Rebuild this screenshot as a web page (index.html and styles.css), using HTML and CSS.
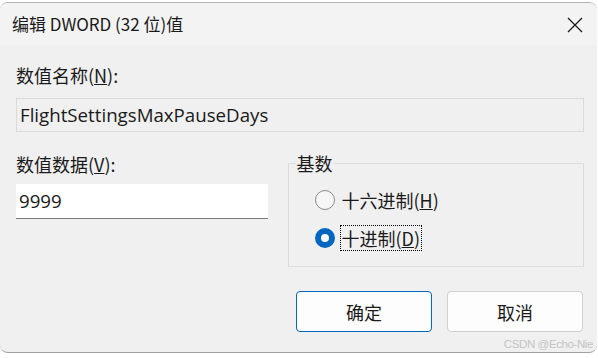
FILE: index.html
```html
<!DOCTYPE html>
<html lang="zh-CN">
<head>
    <meta charset="UTF-8">
    <title>编辑 DWORD (32 位)值</title>
    <link rel="stylesheet" href="styles.css">
</head>
<body>
    <div class="dialog">
        <div class="titlebar">
            <span class="title">编辑 DWORD (32 位)值</span>
            <svg class="close" width="16" height="16" viewBox="0 0 16 16">
                <path d="M1 1 L15 15 M15 1 L1 15" stroke="#1a1a1a" stroke-width="1.3" fill="none"/>
            </svg>
        </div>

        <div class="content">
            <div class="label">数值名称(<u>N</u>):</div>
            <div class="name-field">FlightSettingsMaxPauseDays</div>

            <div class="row">
                <div class="data-col">
                    <div class="label">数值数据(<u>V</u>):</div>
                    <div class="data-field">9999</div>
                </div>

                <fieldset class="base-group">
                    <legend>基数</legend>
                    <div class="radio">
                        <span class="dot"></span>
                        <span class="radio-text">十六进制(<u>H</u>)</span>
                    </div>
                    <div class="radio">
                        <span class="dot checked"></span>
                        <span class="radio-text focus">十进制(<u>D</u>)</span>
                    </div>
                </fieldset>
            </div>

            <div class="buttons">
                <button class="btn primary">确定</button>
                <button class="btn">取消</button>
            </div>
        </div>
        <div class="watermark">CSDN @Echo-Nie</div>
    </div>
</body>
</html>
```

FILE: styles.css
```css
body {
    margin: 0;
    padding: 0;
    background: #ffffff;
    font-family: "Noto Sans CJK SC", "Noto Sans", sans-serif;
    color: #1a1a1a;
    overflow: hidden;
}

.dialog {
    position: relative;
    margin-top: 2px;
    width: 597px;
    height: 349px;
    background: #f0f0f0;
    border-top: 1px solid #b4b4b4;
    border-bottom: 1px solid #a0a0a0;
    border-radius: 8px;
    overflow: hidden;
}

.titlebar {
    height: 42px;
    background: #f3f3f3;
    display: flex;
    align-items: center;
    justify-content: space-between;
    padding: 0 14px 0 12px;
}

.title {
    font-size: 17px;
    margin-top: -2px;
}

.close {
    margin-top: 2px;
}

.content {
    padding: 18px 13px 0 16px;
}

.label {
    font-size: 18px;
    line-height: 24px;
}

.name-field {
    margin-top: 11px;
    height: 34px;
    box-sizing: border-box;
    border: 1px solid #dadada;
    background: #f0f0f0;
    font-family: "Open Sans", sans-serif;
    font-size: 18.7px;
    line-height: 31px;
    padding-left: 3px;
}

.row {
    display: flex;
    margin-top: 20px;
}

.data-col {
    width: 252px;
}

.data-field {
    margin-top: 8px;
    height: 35px;
    box-sizing: border-box;
    background: #ffffff;
    border-bottom: 1px solid #7a7a7a;
    font-family: "Open Sans", sans-serif;
    font-size: 18.7px;
    line-height: 33px;
    padding-left: 3px;
}

.base-group {
    margin: -1px 0 0 20px;
    padding: 12px 0 0 26px;
    width: 297px;
    height: 116px;
    border: 1px solid #dcdcdc;
    box-sizing: border-box;
}

.base-group legend {
    font-size: 18px;
    line-height: 24px;
    padding: 0 1px;
    margin-left: -19px;
}

.radio {
    display: flex;
    align-items: center;
    height: 26px;
    margin-bottom: 12px;
    font-size: 18px;
}

.dot {
    width: 20px;
    height: 20px;
    border-radius: 50%;
    border: 1px solid #8a8a8a;
    background: #f6f6f6;
    box-sizing: border-box;
    margin-right: 5px;
}

.dot.checked {
    border: 6px solid #0067c0;
    background: #ffffff;
}

.radio-text {
    padding: 0 1px;
    line-height: 24px;
    border: 1px solid transparent;
}

.radio-text.focus {
    border: 1px dotted #000000;
}

.buttons {
    display: flex;
    justify-content: flex-end;
    gap: 15px;
    margin-top: 24px;
    margin-right: 1px;
}

.btn {
    width: 136px;
    height: 41px;
    background: #fdfdfd;
    border: 1px solid #d0d0d0;
    border-radius: 4px;
    font-family: "Noto Sans CJK SC", sans-serif;
    font-size: 18px;
    color: #1a1a1a;
}

.btn.primary {
    border-color: #0067c0;
}

.watermark {
    position: absolute;
    right: 4px;
    bottom: 2px;
    font-family: "Liberation Sans", sans-serif;
    font-size: 11.5px;
    letter-spacing: -0.4px;
    color: #c4c4c4;
}
```
